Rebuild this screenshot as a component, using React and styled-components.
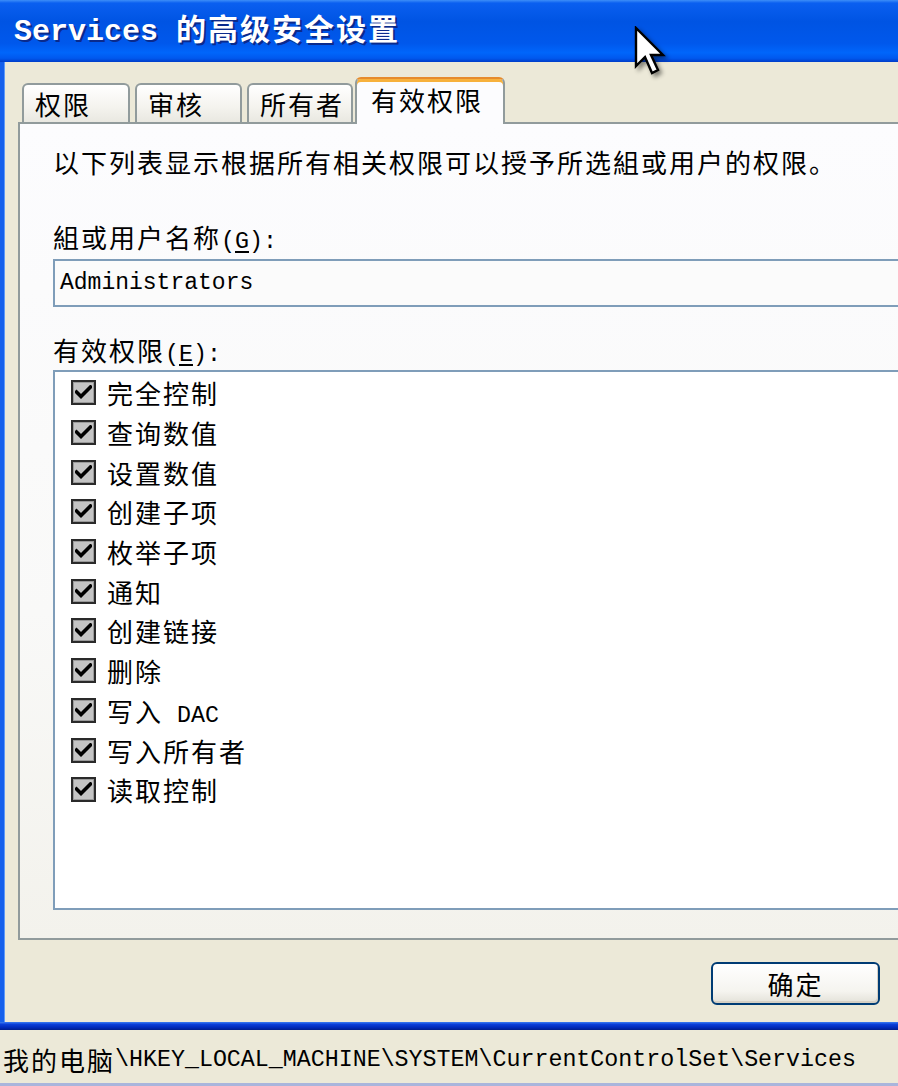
import React from 'react'
import styled, { createGlobalStyle } from 'styled-components'

const CJK = '"Noto Sans CJK SC", "Noto Sans CJK TC", sans-serif'
const MONO = '"Liberation Mono", "DejaVu Sans Mono", monospace'

const GlobalStyle = createGlobalStyle`
  html, body {
    margin: 0;
    padding: 0;
    background: #ece9d8;
  }
  body {
    font-family: ${CJK};
    color: #000;
  }
`

const Screen = styled.div`
  position: relative;
  width: 898px;
  height: 1086px;
  overflow: hidden;
  display: flex;
  flex-direction: column;
`

const TitleBar = styled.div`
  height: 62px;
  flex: none;
  display: flex;
  align-items: center;
  padding-left: 14px;
  background: linear-gradient(
    to bottom,
    #3d8ef8 0,
    #0a5ff0 5%,
    #0054e3 35%,
    #0058ec 70%,
    #0066fb 85%,
    #0058ee 94%,
    #003cc8 100%
  );
`

const Title = styled.div`
  color: #fff;
  font-weight: bold;
  font-size: 30px;
  letter-spacing: 2px;
  line-height: 1;
  text-shadow: 2px 2px 0 #0a2a8c;
  white-space: nowrap;
  padding-bottom: 4px;
`

const Latin = styled.span`
  font-family: ${MONO};
  font-size: ${p => p.$size || 23.3}px;
  letter-spacing: 0;
`

const Body = styled.div`
  box-sizing: border-box;
  flex: none;
  height: 960px;
  display: flex;
  flex-direction: column;
  padding: 17px 18px 0 14px;
  border-left: 4px solid #1560ec;
  box-shadow: inset 1px 0 0 #5e9af8;
  background: #ece9d8;
  overflow: hidden;
`

const TabRow = styled.div`
  display: flex;
  align-items: flex-end;
  gap: 5px;
  height: 45px;
  flex: none;
  margin-left: 4px;
  margin-bottom: -2px;
  position: relative;
  z-index: 1;
`

const Tab = styled.div`
  box-sizing: border-box;
  width: ${p => p.$w}px;
  height: ${p => (p.$active ? 47 : 39)}px;
  margin-bottom: ${p => (p.$active ? 0 : 2)}px;
  margin-left: ${p => (p.$active ? -3 : 0)}px;
  border: 2px solid #919b9c;
  border-bottom: none;
  border-radius: 6px 6px 0 0;
  padding-left: ${p => (p.$active ? 14 : 11)}px;
  font-size: 26px;
  letter-spacing: 2px;
  line-height: ${p => (p.$active ? 42 : 38)}px;
  background: ${p =>
    p.$active
      ? '#fcfcfe'
      : 'linear-gradient(to bottom, #ffffff 0, #f4f3ee 60%, #e9e8e1 100%)'};
  box-shadow: ${p => (p.$active ? 'inset 0 3px 0 #f7b13c' : 'none')};
  border-top-color: ${p => (p.$active ? '#e68b2c' : '#919b9c')};
  white-space: nowrap;
`

const Panel = styled.div`
  box-sizing: border-box;
  width: 1100px;
  height: 818px;
  flex: none;
  border: 2px solid #919b9c;
  padding: 22px 0 28px 33px;
  background: linear-gradient(to bottom, #fcfcfe 0, #f9f9f8 60%, #f3f2ec 100%);
  display: flex;
  flex-direction: column;
`

const Line = styled.div`
  font-size: 26px;
  letter-spacing: 2px;
  line-height: 32px;
  height: 32px;
  margin-top: ${p => p.$mt || 0}px;
  white-space: nowrap;
`

const Key = styled.span`
  text-decoration: underline;
  text-underline-offset: 3px;
`

const TextBox = styled.div`
  box-sizing: border-box;
  height: 48px;
  flex: none;
  margin-top: 6px;
  border: 2px solid #7f9db9;
  background: #fbfbfb;
  padding-left: 5px;
  display: flex;
  align-items: center;
  font-family: ${MONO};
  font-size: 23px;
`

const ListBox = styled.div`
  box-sizing: border-box;
  height: 540px;
  flex: none;
  margin-top: 4px;
  border: 2px solid #7f9db9;
  background: #fff;
  padding: 1px 0 0 16px;
`

const Item = styled.div`
  height: 39.7px;
  display: flex;
  align-items: center;
  gap: 11px;
  font-size: 26px;
  letter-spacing: 2px;
  white-space: nowrap;
`

const Box = styled.span`
  box-sizing: border-box;
  width: 25px;
  height: 25px;
  flex: none;
  border: 2px solid #2a2a2a;
  background: #c4c4c4;
  box-shadow: inset 0 0 0 1px #9a9a9a;
  display: flex;
  align-items: center;
  justify-content: center;
`

const ButtonRow = styled.div`
  flex: 1;
  display: flex;
  justify-content: flex-end;
  align-items: flex-start;
  padding-top: 22px;
`

const Button = styled.div`
  box-sizing: border-box;
  width: 169px;
  height: 43px;
  border: 2px solid #003c74;
  border-radius: 6px;
  background: linear-gradient(to bottom, #ffffff 0, #f5f4ef 70%, #e3e1d8 100%);
  box-shadow: inset -1px -2px 0 #d6d0c4;
  display: flex;
  align-items: center;
  justify-content: center;
  font-size: 26px;
  letter-spacing: 2px;
`

const BottomEdge = styled.div`
  height: 8px;
  flex: none;
  background: linear-gradient(to bottom, #3a7cf2 0, #0a3ed8 30%, #0029b8 70%, #001e8c 100%);
`

const StatusBar = styled.div`
  height: 56px;
  flex: none;
  box-sizing: border-box;
  display: flex;
  align-items: center;
  padding-left: 3px;
  padding-top: 6px;
  background: #ece9d8;
  border-bottom: 3px solid #a9b5dc;
  font-size: 26px;
  letter-spacing: 2px;
  line-height: 32px;
  white-space: nowrap;
`

const Cursor = styled.svg`
  position: absolute;
  left: 634px;
  top: 26px;
  filter: drop-shadow(3px 3px 2px rgba(0, 0, 0, 0.45));
`

const perms = [
  '完全控制',
  '查询数值',
  '设置数值',
  '创建子项',
  '枚举子项',
  '通知',
  '创建链接',
  '删除',
  ['写入', 'DAC'],
  '写入所有者',
  '读取控制'
]

const Check = () => (
  <svg width='17' height='15' viewBox='0 0 17 15'>
    <path d='M1.5 7 L6 11.5 L15.5 2' fill='none' stroke='#000' strokeWidth='3.6' strokeLinecap='square' />
  </svg>
)

export default function App () {
  return (
    <>
      <GlobalStyle />
      <Screen>
        <TitleBar>
          <Title>
            <Latin $size={30}>Services </Latin>的高级安全设置
          </Title>
        </TitleBar>
        <Body>
          <TabRow>
            <Tab $w={108}>权限</Tab>
            <Tab $w={107}>审核</Tab>
            <Tab $w={106}>所有者</Tab>
            <Tab $w={150} $active>有效权限</Tab>
          </TabRow>
          <Panel>
            <Line>以下列表显示根据所有相关权限可以授予所选組或用户的权限。</Line>
            <Line $mt={43}>
              組或用户名称<Latin>(<Key>G</Key>):</Latin>
            </Line>
            <TextBox>Administrators</TextBox>
            <Line $mt={27}>
              有效权限<Latin>(<Key>E</Key>):</Latin>
            </Line>
            <ListBox>
              {perms.map((p, i) => (
                <Item key={i}>
                  <Box><Check /></Box>
                  {Array.isArray(p)
                    ? <span>{p[0]}<Latin> {p[1]}</Latin></span>
                    : <span>{p}</span>}
                </Item>
              ))}
            </ListBox>
          </Panel>
          <ButtonRow>
            <Button>确定</Button>
          </ButtonRow>
        </Body>
        <BottomEdge />
        <StatusBar>
          我的电脑<Latin>\HKEY_LOCAL_MACHINE\SYSTEM\CurrentControlSet\Services</Latin>
        </StatusBar>
        <Cursor width='34' height='52' viewBox='0 0 34 52'>
          <path
            d='M2 2 L2 40 L11 31 L18 47 L24 44 L17 29 L29 29 Z'
            fill='#fff'
            stroke='#000'
            strokeWidth='2.4'
            strokeLinejoin='miter'
          />
        </Cursor>
      </Screen>
    </>
  )
}
